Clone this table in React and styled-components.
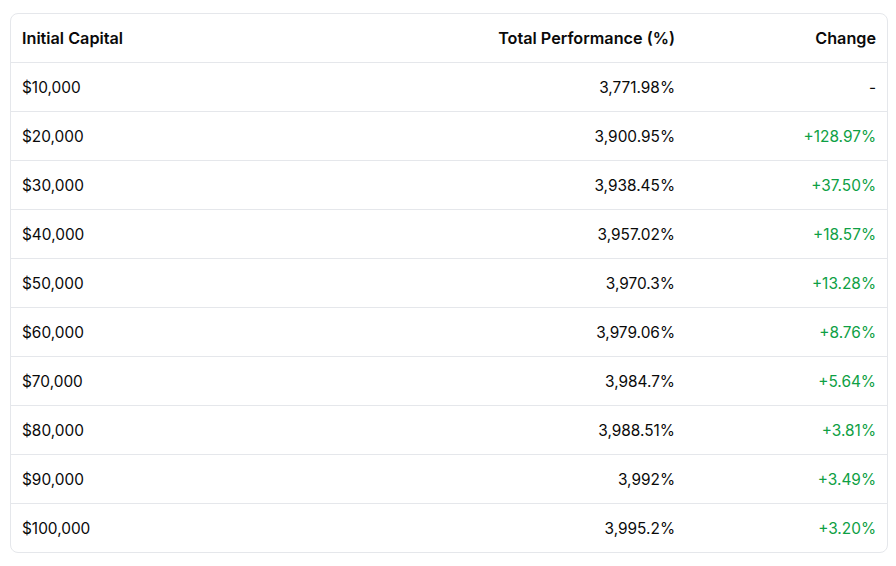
import React from 'react'
import styled, { createGlobalStyle } from 'styled-components'

const rows = [
    { capital: '$10,000', perf: '3,771.98%', change: '-' },
    { capital: '$20,000', perf: '3,900.95%', change: '+128.97%' },
    { capital: '$30,000', perf: '3,938.45%', change: '+37.50%' },
    { capital: '$40,000', perf: '3,957.02%', change: '+18.57%' },
    { capital: '$50,000', perf: '3,970.3%', change: '+13.28%' },
    { capital: '$60,000', perf: '3,979.06%', change: '+8.76%' },
    { capital: '$70,000', perf: '3,984.7%', change: '+5.64%' },
    { capital: '$80,000', perf: '3,988.51%', change: '+3.81%' },
    { capital: '$90,000', perf: '3,992%', change: '+3.49%' },
    { capital: '$100,000', perf: '3,995.2%', change: '+3.20%' },
]

function App() {
    return (
        <>
            <GlobalStyle />
            <Page>
                <Card>
                    <Row $header>
                        <Cell>Initial Capital</Cell>
                        <Cell $right>Total Performance (%)</Cell>
                        <Cell $right>Change</Cell>
                    </Row>
                    {rows.map((r) => (
                        <Row key={r.capital}>
                            <Cell>{r.capital}</Cell>
                            <Cell $right>{r.perf}</Cell>
                            <Cell $right $up={r.change.startsWith('+')}>{r.change}</Cell>
                        </Row>
                    ))}
                </Card>
            </Page>
        </>
    )
}

export default App

const GlobalStyle = createGlobalStyle`
    *{
        box-sizing: border-box;
    }
    body{
        margin: 0;
        background: #fff;
        font-family: Inter, "Noto Sans", sans-serif;
        color: #0a0a0a;
    }
`

const Page = styled.div`
    padding: 13px 8px 14px 10px;
`

const Card = styled.div`
    border: 1px solid #e5e7eb;
    border-radius: 8px;
    overflow: hidden;
`

const Row = styled.div`
    display: grid;
    grid-template-columns: 337px 338px 1fr;
    height: 49px;
    align-items: center;
    font-size: ${(p) => (p.$header ? '16.2px' : '15.4px')};
    font-weight: ${(p) => (p.$header ? 600 : 400)};
    border-top: 1px solid #e5e7eb;

    &:first-child{
        border-top: none;
        height: 48px;
    }
`

const Cell = styled.div`
    padding: 0 11px;
    text-align: ${(p) => (p.$right ? 'right' : 'left')};
    color: ${(p) => (p.$up ? '#0ea044' : 'inherit')};
`
